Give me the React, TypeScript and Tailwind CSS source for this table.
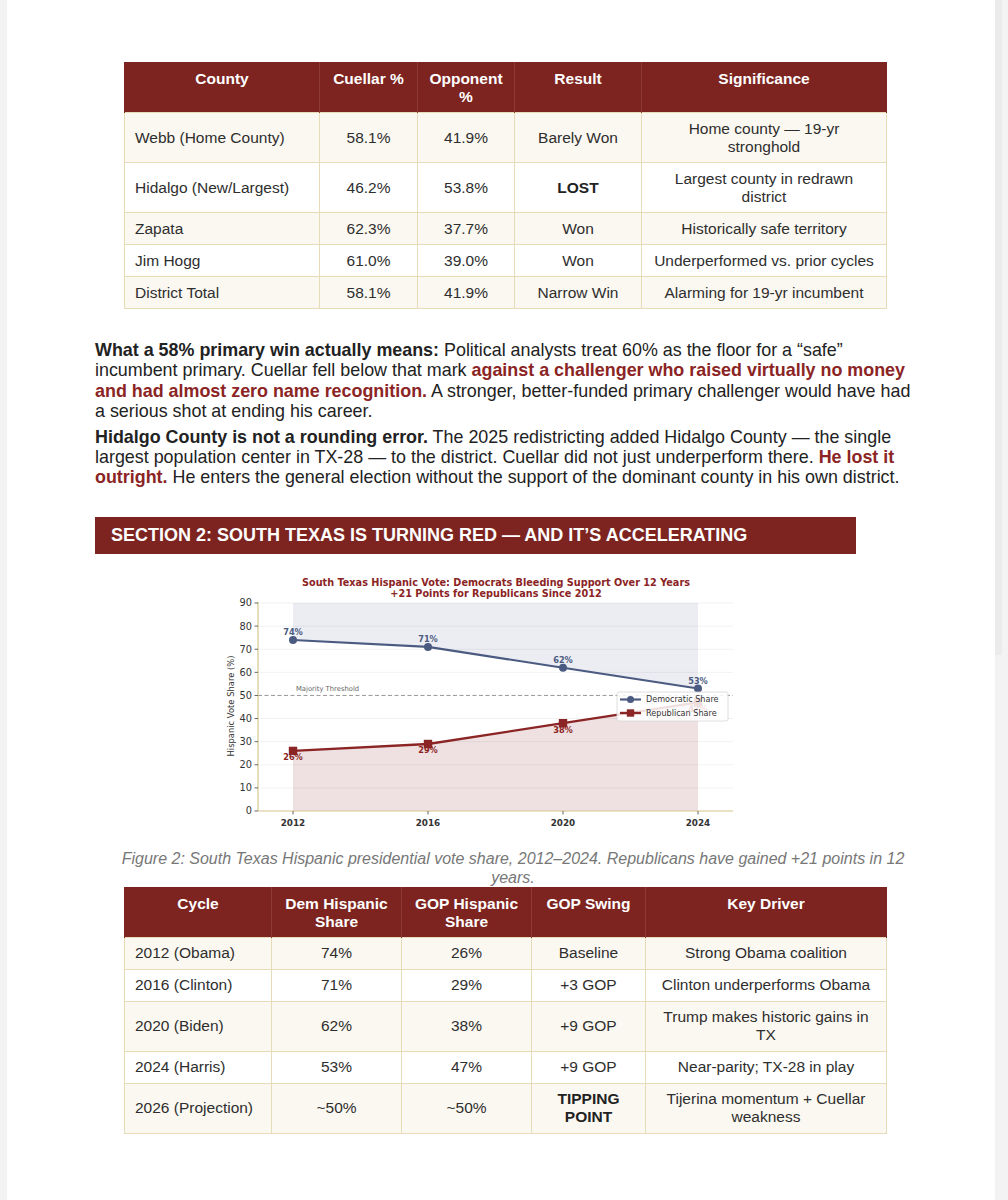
import React from "react";

const DEM = "#4b5a80";
const REP = "#8b2424";

const years = [2012, 2016, 2020, 2024];
const dem = [74, 71, 62, 53];
const rep = [26, 29, 38, 47];

const px = (yr: number) => 293 + ((yr - 2012) / 4) * 135;
const py = (v: number) => 811 - v * 2.311;

function VoteChart() {
  const demPts = years.map((y, i) => [px(y), py(dem[i])]);
  const repPts = years.map((y, i) => [px(y), py(rep[i])]);
  const line = (pts: number[][]) => pts.map((p) => p.join(",")).join(" ");
  const demFill =
    `293,603 698,603 ` + line([...demPts].reverse());
  const repFill = `293,811 698,811 ` + line([...repPts].reverse());

  return (
    <svg width={530} height={290} viewBox="215 554 530 290" className="block" style={{ fontFamily: "'DejaVu Sans', sans-serif" }}>
      <text x={496} y={585.5} textAnchor="middle" fontSize={9.7} fontWeight="bold" fill="#8b2424">
        South Texas Hispanic Vote: Democrats Bleeding Support Over 12 Years
      </text>
      <text x={496} y={596.5} textAnchor="middle" fontSize={9.7} fontWeight="bold" fill="#8b2424">
        +21 Points for Republicans Since 2012
      </text>

      <polygon points={demFill} fill="#e9ebf2" opacity={0.9} />
      <polygon points={repFill} fill="#eedfdf" opacity={0.95} />

      {[10, 20, 30, 40, 60, 70, 80, 90].map((v) => (
        <line key={v} x1={258} x2={733} y1={py(v)} y2={py(v)} stroke="#000" strokeOpacity={0.07} strokeWidth={0.8} />
      ))}
      <line x1={258} x2={733} y1={py(50)} y2={py(50)} stroke="#8c8c8c" strokeWidth={0.9} strokeDasharray="4 2.5" />
      <text x={296} y={691} fontSize={6.8} fill="#666">Majority Threshold</text>

      {/* axes */}
      <line x1={258} x2={258} y1={602} y2={811} stroke="#d6c68c" strokeWidth={1.2} />
      <line x1={258} x2={733} y1={811} y2={811} stroke="#d6c68c" strokeWidth={1.2} />
      {[0, 10, 20, 30, 40, 50, 60, 70, 80, 90].map((v) => (
        <g key={v}>
          <line x1={254.5} x2={258} y1={py(v)} y2={py(v)} stroke="#444" strokeWidth={0.8} />
          <text x={252} y={py(v) + 3.4} textAnchor="end" fontSize={9.8} fill="#333">
            {v}
          </text>
        </g>
      ))}
      {years.map((y) => (
        <g key={y}>
          <line x1={px(y)} x2={px(y)} y1={811} y2={814.5} stroke="#444" strokeWidth={0.8} />
          <text x={px(y)} y={825.5} textAnchor="middle" fontSize={8.8} fontWeight="bold" fill="#333">
            {y}
          </text>
        </g>
      ))}
      <text
        x={0}
        y={0}
        transform="translate(233.5 706) rotate(-90)"
        textAnchor="middle"
        fontSize={8.4}
        fill="#333"
      >
        Hispanic Vote Share (%)
      </text>

      {/* lines */}
      <polyline points={line(demPts)} fill="none" stroke={DEM} strokeWidth={2.2} />
      <polyline points={line(repPts)} fill="none" stroke={REP} strokeWidth={2.4} />
      {demPts.map(([x, y], i) => (
        <g key={i}>
          <circle cx={x} cy={y} r={4} fill={DEM} />
          <text x={x} y={y - 5} textAnchor="middle" fontSize={8.2} fontWeight="bold" fill={DEM}>
            {dem[i]}%
          </text>
        </g>
      ))}
      {repPts.map(([x, y], i) => (
        <g key={i}>
          <rect x={x - 4.2} y={y - 4.2} width={8.4} height={8.4} fill={REP} />
          <text x={x} y={y + 9.5} textAnchor="middle" fontSize={8.2} fontWeight="bold" fill={REP}>
            {rep[i]}%
          </text>
        </g>
      ))}

      {/* legend */}
      <rect x={617} y={692} width={111} height={29} rx={2} fill="#fff" fillOpacity={0.85} stroke="#d6d6d6" strokeWidth={0.8} />
      <line x1={620} x2={641} y1={699.5} y2={699.5} stroke={DEM} strokeWidth={2.2} />
      <circle cx={630.5} cy={699.5} r={3.6} fill={DEM} />
      <text x={646} y={702.3} fontSize={8.1} fill="#333">Democratic Share</text>
      <line x1={620} x2={641} y1={713} y2={713} stroke={REP} strokeWidth={2.4} />
      <rect x={626.8} y={709.3} width={7.4} height={7.4} fill={REP} />
      <text x={646} y={715.8} fontSize={8.1} fill="#333">Republican Share</text>
    </svg>
  );
}

type Cell = React.ReactNode;

function DataTable({
  widths,
  head,
  rows,
}: {
  widths: number[];
  head: Cell[];
  rows: Cell[][];
}) {
  return (
    <table className="table-fixed border-collapse w-[762px] ml-[29px] text-[15.5px] text-[#2e2e2e]">
      <colgroup>
        {widths.map((w, i) => (
          <col key={i} style={{ width: w }} />
        ))}
      </colgroup>
      <thead>
        <tr className="bg-[#7d2420]">
          {head.map((h, i) => (
            <th
              key={i}
              className={`align-top pt-[8px] pb-[6px] px-[8px] leading-[18px] font-bold text-white text-center border-x border-[#8e3b36] ${
                i === 0 ? "border-l-[#7d2420]" : ""
              } ${i === head.length - 1 ? "border-r-[#7d2420]" : ""}`}
            >
              {h}
            </th>
          ))}
        </tr>
      </thead>
      <tbody>
        {rows.map((r, ri) => (
          <tr key={ri} className={ri % 2 === 0 ? "bg-[#fbf8f1]" : "bg-white"}>
            {r.map((c, ci) => (
              <td
                key={ci}
                className={`border border-[#e6dcb8] py-[6.5px] px-[10px] leading-[18px] align-middle ${
                  ci === 0 ? "text-left" : "text-center"
                }`}
              >
                {c}
              </td>
            ))}
          </tr>
        ))}
      </tbody>
    </table>
  );
}

export default function App() {
  const red = "font-bold text-[#8b2424]";
  return (
    <div className="min-h-[1200px] bg-[#f3f3f3] flex" style={{ fontFamily: "'Liberation Sans', Arial, sans-serif" }}>
      <div className="w-[7px] shrink-0" />
      <div className="w-[988px] shrink-0 bg-white min-h-[1200px] pt-[62px]">
        <div className="ml-[88px] w-[825px]">
          <DataTable
            widths={[195, 98, 97, 127, 245]}
            head={["County", "Cuellar %", <>Opponent<br />%</>, "Result", "Significance"]}
            rows={[
              ["Webb (Home County)", "58.1%", "41.9%", "Barely Won", <>Home county — 19-yr<br />stronghold</>],
              ["Hidalgo (New/Largest)", "46.2%", "53.8%", <b className="font-bold text-[#222]">LOST</b>, <>Largest county in redrawn<br />district</>],
              ["Zapata", "62.3%", "37.7%", "Won", "Historically safe territory"],
              ["Jim Hogg", "61.0%", "39.0%", "Won", "Underperformed vs. prior cycles"],
              ["District Total", "58.1%", "41.9%", "Narrow Win", "Alarming for 19-yr incumbent"],
            ]}
          />

          <div className="mt-[31px] text-[17.9px] leading-[20.4px] text-[#222]">
            <p>
              <b className="font-bold">What a 58% primary win actually means:</b> Political analysts treat 60% as the floor for a “safe” incumbent primary. Cuellar fell below that mark{" "}
              <span className={red}>against a challenger who raised virtually no money and had almost zero name recognition.</span> A stronger, better-funded primary challenger would have had a serious shot at ending his career.
            </p>
            <p className="mt-[5px]">
              <b className="font-bold">Hidalgo County is not a rounding error.</b> The 2025 redistricting added Hidalgo County — the single largest population center in TX-28 — to the district. Cuellar did not just underperform there.{" "}
              <span className={red}>He lost it outright.</span> He enters the general election without the support of the dominant county in his own district.
            </p>
          </div>

          <div className="mt-[29px] w-[761px] h-[37px] bg-[#7d2420] flex items-center pl-[16px]">
            <h2 className="text-[18px] font-bold text-white leading-none">
              SECTION 2: SOUTH TEXAS IS TURNING RED — AND IT’S ACCELERATING
            </h2>
          </div>

          <div className="ml-[120px]">
            <VoteChart />
          </div>

          <p className="mt-[5px] ml-[18px] w-[800px] text-center italic text-[16px] leading-[19px] text-[#777]">
            Figure 2: South Texas Hispanic presidential vote share, 2012–2024. Republicans have gained +21 points in 12 years.
          </p>

          <DataTable
            widths={[147, 130, 130, 114, 241]}
            head={["Cycle", <>Dem Hispanic<br />Share</>, <>GOP Hispanic<br />Share</>, "GOP Swing", "Key Driver"]}
            rows={[
              ["2012 (Obama)", "74%", "26%", "Baseline", "Strong Obama coalition"],
              ["2016 (Clinton)", "71%", "29%", "+3 GOP", "Clinton underperforms Obama"],
              ["2020 (Biden)", "62%", "38%", "+9 GOP", <>Trump makes historic gains in<br />TX</>],
              ["2024 (Harris)", "53%", "47%", "+9 GOP", "Near-parity; TX-28 in play"],
              ["2026 (Projection)", "~50%", "~50%", <b className="font-bold text-[#222]">TIPPING<br />POINT</b>, <>Tijerina momentum + Cuellar<br />weakness</>],
            ]}
          />
        </div>
      </div>
      <div className="flex-1 flex">
        <div className="w-[7px] h-[655px] bg-[#ebebeb]" />
      </div>
    </div>
  );
}
